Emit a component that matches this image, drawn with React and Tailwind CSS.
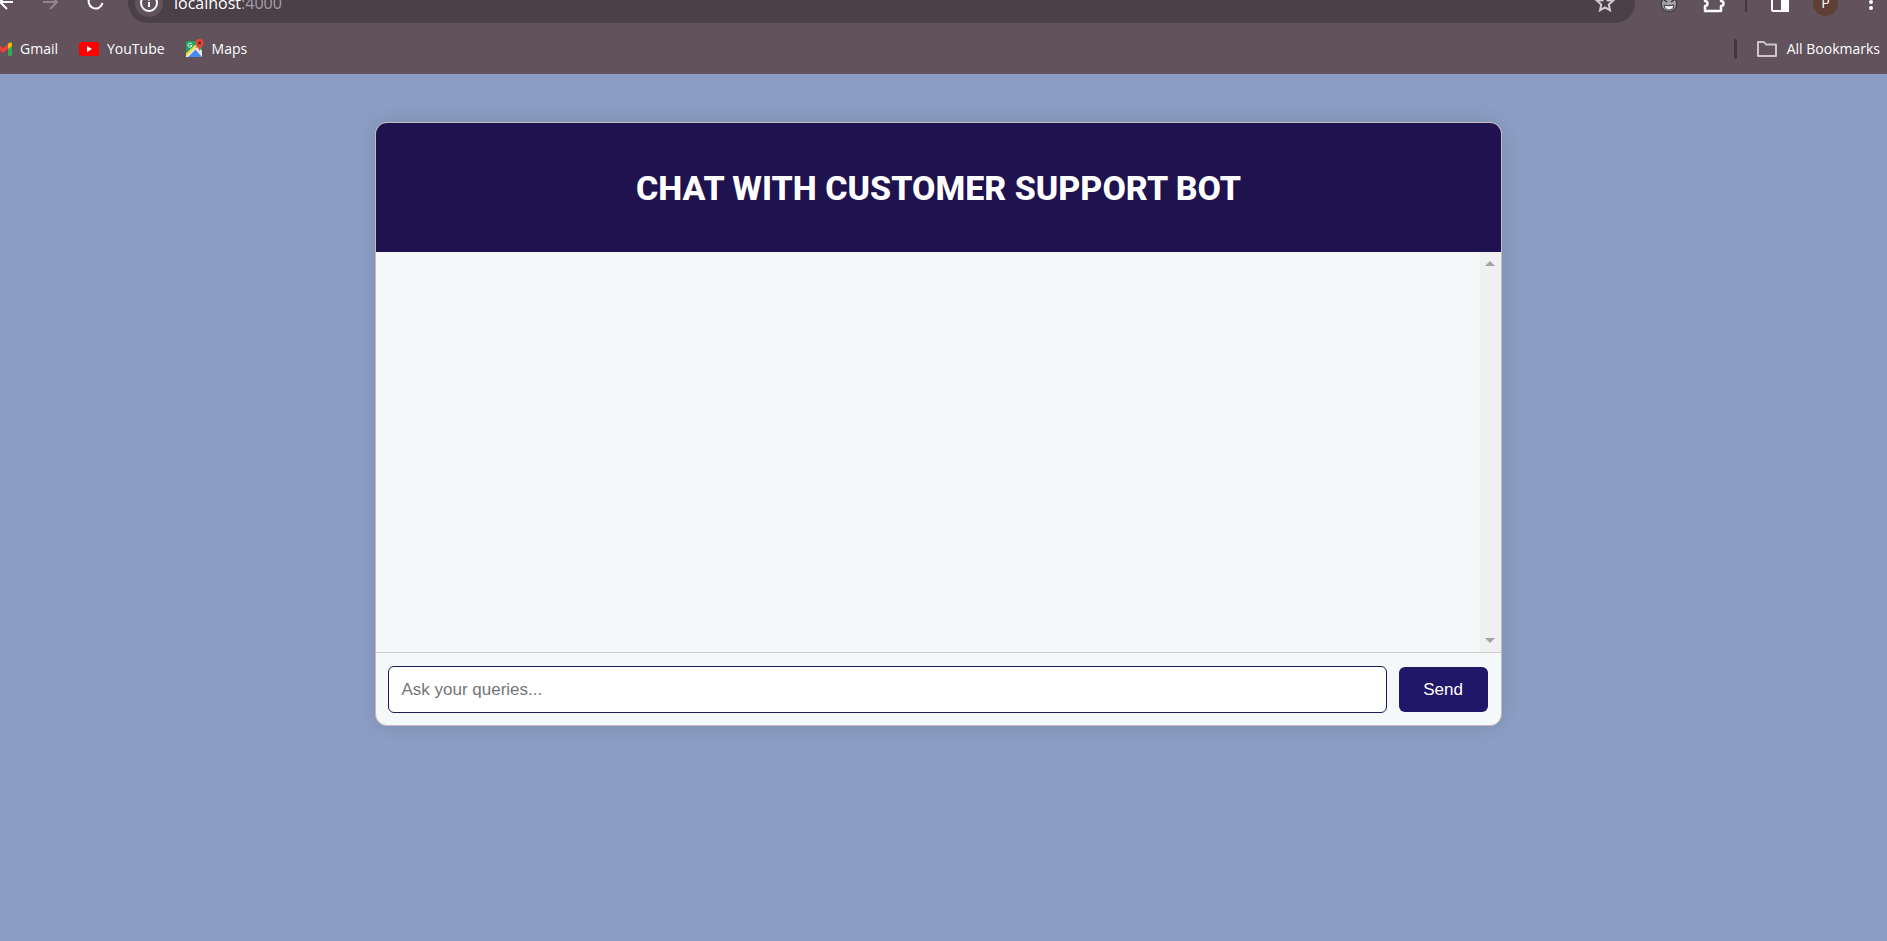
import React, { useState } from "react";

function GmailIcon() {
  return (
    <svg viewBox="0 0 18 14" className="h-[14px] w-[18px] shrink-0" aria-hidden="true">
      <path d="M0 2v11a1 1 0 0 0 1 1h3V6z" fill="#4285f4" />
      <path d="M14 6v8h3a1 1 0 0 0 1-1V3z" fill="#34a853" />
      <path d="M4 2l5 4 5-4v5l-5 4-5-4z" fill="#ea4335" />
      <path d="M14 2l1.300-1.200C16.500 0 18 .7 18 2.200V4l-4 3z" fill="#fbbc04" />
      <path d="M4 2L2.700.8C1.500 0 0 .7 0 2.200V4l4 3z" fill="#c5221f" />
    </svg>
  );
}

function YouTubeIcon() {
  return (
    <svg viewBox="0 0 20 14" className="h-[14px] w-5 shrink-0" aria-hidden="true">
      <rect width="20" height="14" rx="2.500" fill="#f00" />
      <path d="M8 4l5 3-5 3z" fill="#fff" />
    </svg>
  );
}

function MapsIcon() {
  return (
    <svg viewBox="0 0 18 19" className="h-[19px] w-[18px] shrink-0" aria-hidden="true">
      <rect y="2" width="16" height="16" rx="1.500" fill="#1fa463" />
      <path d="M1 18L9 10l7 8z" fill="#4a89f3" />
      <path d="M9 10l3-2 4 4v6z" fill="#e8eaed" />
      <path d="M0 16.500L9 8l1.500 1.500L2 18H0z" fill="#f2f2f2" />
      <path d="M0 14.500L9.500 5.500l1.500 2L1 17l-1-.5z" fill="#ffd54b" />
      <path d="M5.800 5.200a2 2 0 1 0 .2 1.300H4.300" fill="none" stroke="#fff" strokeWidth="1" />
      <path d="M13.500 0a4 4 0 0 0-4 4c0 3 3.300 4 4 8.500.7-4.500 4-5.500 4-8.500a4 4 0 0 0-4-4z" fill="#ea4335" />
      <circle cx="13.500" cy="4" r="1.500" fill="#7b1d16" />
    </svg>
  );
}

function Toolbar() {
  return (
    <div className="flex h-[23px] items-end overflow-hidden">
      <div className="flex h-10 w-full shrink-0 items-center">
        <div className="flex w-32 shrink-0 items-center">
          <button aria-label="Back" className="w-[14px] overflow-hidden">
            <svg viewBox="0 0 14 20" className="h-5 w-[14px]" fill="none" stroke="#fff" strokeWidth="2" aria-hidden="true">
              <path d="M13 9H0M7 2L0 9l7 7" />
            </svg>
          </button>
          <button aria-label="Forward" className="ml-7">
            <svg viewBox="0 0 16 20" className="h-5 w-4" fill="none" stroke="#93878f" strokeWidth="2" aria-hidden="true">
              <path d="M1 9h13M8 2l7 7-7 7" />
            </svg>
          </button>
          <button aria-label="Reload" className="ml-7">
            <svg viewBox="0 0 20 20" className="h-5 w-5" fill="none" stroke="#fff" strokeWidth="2" aria-hidden="true">
              <path d="M16.500 10A7 7 0 1 1 15 4" />
              <path d="M16.500 0v6h-6" />
            </svg>
          </button>
        </div>
        <div className="flex h-10 min-w-0 flex-1 items-center rounded-full bg-[#4b3f48] pl-[7px] pr-5">
          <button aria-label="Site information" className="flex h-7 w-7 shrink-0 items-center justify-center rounded-full bg-[#61525c]">
            <svg viewBox="0 0 18 18" className="h-[18px] w-[18px]" fill="none" stroke="#fff" strokeWidth="2" aria-hidden="true">
              <circle cx="9" cy="9" r="8" />
              <path d="M9 8v5M9 4.500v2" />
            </svg>
          </button>
          <div className="ml-[11px] flex-1 text-[16px] leading-6 text-[#a79fa5]">
            <span className="text-white">localhost</span>:4000
          </div>
          <button aria-label="Bookmark this tab">
            <svg viewBox="0 0 20 20" className="h-5 w-5" fill="none" stroke="#d0cbce" strokeWidth="2" aria-hidden="true">
              <path d="M10 2l2.400 5.200 5.600.6-4.200 3.800 1.200 5.600-5-2.900-5 2.900 1.200-5.600L2 7.800l5.600-.6z" />
            </svg>
          </button>
        </div>
        <div className="flex w-[252px] shrink-0 items-center">
          <button aria-label="Extension" className="ml-[25px]">
            <svg viewBox="0 0 18 20" className="h-5 w-[18px]" aria-hidden="true">
              <circle cx="9" cy="11" r="8.500" fill="#454145" />
              <circle cx="9" cy="11" r="7" fill="#a5a2a5" />
              <path d="M4 7l3 2M14 7l-3 2" stroke="#3c393c" strokeWidth="1.500" />
              <path d="M4 12q5 1.500 10 0-1 5-5 5t-5-5z" stroke="#3c393c" strokeWidth="1" fill="#f2f2f2" />
            </svg>
          </button>
          <button aria-label="Extensions" className="ml-[25px]">
            <svg viewBox="0 0 22 22" className="h-[22px] w-[22px]" fill="none" stroke="#fff" strokeWidth="2.500" strokeLinejoin="round" aria-hidden="true">
              <path d="M2 4h5a3 3 0 0 1 6 0h5v5a2.500 2.500 0 0 1 0 5v5H2v-5a2.500 2.500 0 0 0 0-5z" />
            </svg>
          </button>
          <span className="ml-5 h-[18px] w-[2px] bg-[#42373f]" />
          <button aria-label="Side panel" className="ml-6">
            <svg viewBox="0 0 18 18" className="h-[18px] w-[18px]" fill="none" stroke="#fff" strokeWidth="2" aria-hidden="true">
              <rect x="1" y="1" width="16" height="16" rx="1" />
              <path d="M11 1h6v16h-6z" fill="#fff" />
            </svg>
          </button>
          <button aria-label="Profile" className="ml-6 h-[25px] w-[25px] rounded-full bg-[#5c4033] text-[14px] leading-6 text-white">
            P
          </button>
          <button aria-label="Menu" className="ml-[30px]">
            <svg viewBox="0 0 6 20" className="h-5 w-1.5" fill="#fff" aria-hidden="true">
              <circle cx="3" cy="3" r="2" />
              <circle cx="3" cy="9" r="2" />
              <circle cx="3" cy="15" r="2" />
            </svg>
          </button>
        </div>
      </div>
    </div>
  );
}

function Bookmarks() {
  return (
    <nav aria-label="Bookmarks" className="flex h-[51px] items-center justify-between overflow-hidden text-[14px] leading-5 text-white">
      <div className="-ml-[6px] flex items-center gap-[21px]">
        <a href="#gmail" className="flex items-center gap-2">
          <GmailIcon />
          Gmail
        </a>
        <a href="#youtube" className="flex items-center gap-2">
          <YouTubeIcon />
          YouTube
        </a>
        <a href="#maps" className="flex items-center gap-2">
          <MapsIcon />
          Maps
        </a>
      </div>
      <div className="flex items-center pr-[7px]">
        <span className="h-5 w-[3px] rounded-sm bg-[#42373f]" />
        <button className="ml-5 flex items-center gap-2.5">
          <svg viewBox="0 0 20 16" className="h-4 w-5" fill="none" stroke="#cbc6ca" strokeWidth="2" strokeLinejoin="round" aria-hidden="true">
            <path d="M1 1h6l2 2.500h10V15H1z" />
          </svg>
          All Bookmarks
        </button>
      </div>
    </nav>
  );
}

function ChatCard() {
  const [query, setQuery] = useState("");
  return (
    <section className="w-3/5 overflow-hidden rounded-xl border border-[#c9b9c3] bg-[#f4f8f9] shadow-[0_0_20px_rgba(0,0,0,0.1)]">
      <header className="bg-[#1e124f] pt-[43px] pb-[41px] text-center font-['Roboto','Liberation_Sans',sans-serif]">
        <h1 className="text-[34px] leading-[45px] font-extrabold text-white">CHAT WITH CUSTOMER SUPPORT BOT</h1>
      </header>
      <div className="flex h-[401px] border-b border-[#cccccc]">
        <div className="flex-1" role="log" aria-label="Messages" />
        <div className="flex w-[21px] flex-col items-center justify-between bg-[#f0f0f0] py-[9px]">
          <button aria-label="Scroll up">
            <svg viewBox="0 0 10 5" className="block h-[5px] w-[10px]" fill="#a3a3a3" aria-hidden="true">
              <path d="M0 5l5-5 5 5z" />
            </svg>
          </button>
          <button aria-label="Scroll down">
            <svg viewBox="0 0 10 5" className="block h-[5px] w-[10px]" fill="#a3a3a3" aria-hidden="true">
              <path d="M0 0l5 5 5-5z" />
            </svg>
          </button>
        </div>
      </div>
      <form className="flex items-center gap-3 pt-[13px] pr-[13px] pb-3 pl-3" onSubmit={(e) => e.preventDefault()}>
        <input
          aria-label="Ask your queries"
          value={query}
          onChange={(e) => setQuery(e.target.value)}
          placeholder="Ask your queries..."
          className="h-[47px] min-w-0 flex-1 rounded-md border border-[#1f1a5c] bg-white px-3 text-[17px] text-gray-800 outline-none placeholder:text-[#757575]"
        />
        <button type="submit" className="h-[45px] w-[89px] rounded-md bg-[#201768] text-[17px] text-white">
          Send
        </button>
      </form>
    </section>
  );
}

export default function App() {
  return (
    <div className="flex min-h-screen flex-col bg-[#8b9dc3]">
      <div className="bg-[#61525c] font-['Open_Sans','Noto_Sans',sans-serif]">
        <Toolbar />
        <Bookmarks />
      </div>
      <main className="flex flex-1 items-start justify-center pt-12 pr-[10px] pb-12 font-['Liberation_Sans',Arial,sans-serif]">
        <ChatCard />
      </main>
    </div>
  );
}
